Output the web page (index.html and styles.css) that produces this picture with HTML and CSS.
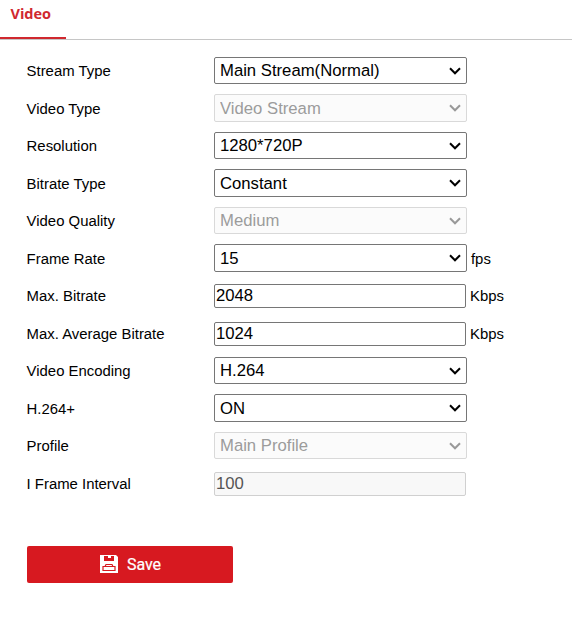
FILE: index.html
```
<!DOCTYPE html>
<html lang="en">
<head>
<meta charset="utf-8">
<title>Video</title>
<link rel="stylesheet" href="styles.css">
</head>
<body>
<svg width="0" height="0" class="defs"><symbol id="chevron" viewBox="0 0 12 8"><path d="M1 1.3l5 5 5-5" fill="none" stroke="currentColor" stroke-width="2"/></symbol></svg>
<nav class="tabs"><a class="tab">Video</a></nav>
<form class="form">
<div class="row"><label>Stream Type</label><div class="pick"><select><option>Main Stream(Normal)</option></select><svg class="chevron"><use href="#chevron"/></svg></div></div>
<div class="row"><label>Video Type</label><div class="pick off"><select disabled><option>Video Stream</option></select><svg class="chevron"><use href="#chevron"/></svg></div></div>
<div class="row"><label>Resolution</label><div class="pick"><select><option>1280*720P</option></select><svg class="chevron"><use href="#chevron"/></svg></div></div>
<div class="row"><label>Bitrate Type</label><div class="pick"><select><option>Constant</option></select><svg class="chevron"><use href="#chevron"/></svg></div></div>
<div class="row"><label>Video Quality</label><div class="pick off"><select disabled><option>Medium</option></select><svg class="chevron"><use href="#chevron"/></svg></div></div>
<div class="row"><label>Frame Rate</label><div class="pick"><select><option>15</option></select><svg class="chevron"><use href="#chevron"/></svg></div><span class="unit">fps</span></div>
<div class="row"><label>Max. Bitrate</label><input type="text" value="2048"><span class="unit">Kbps</span></div>
<div class="row"><label>Max. Average Bitrate</label><input type="text" value="1024"><span class="unit">Kbps</span></div>
<div class="row"><label>Video Encoding</label><div class="pick"><select><option>H.264</option></select><svg class="chevron"><use href="#chevron"/></svg></div></div>
<div class="row"><label>H.264+</label><div class="pick"><select><option>ON</option></select><svg class="chevron"><use href="#chevron"/></svg></div></div>
<div class="row"><label>Profile</label><div class="pick off"><select disabled><option>Main Profile</option></select><svg class="chevron"><use href="#chevron"/></svg></div></div>
<div class="row"><label>I Frame Interval</label><input type="text" value="100" disabled></div>
<button class="save" type="button">
<svg width="18" height="18" viewBox="0 0 18 18"><path fill="#fff" d="M0 0h16l2 2v16H0z"/><path fill="#d71920" d="M4 1h4v2h3V1h3v5H4z"/><path fill="none" stroke="#d71920" stroke-width="1.200" d="M5 11.500l1-2h6l1 2M3 11.500h12v4H3z"/></svg>
<span>Save</span></button>
</form>
</body>
</html>
```
FILE: styles.css
```
body {
  margin: 0;
  background: #fff;
  color: #000;
  font: 14.9px "Liberation Sans", Arial, sans-serif;
}
.defs {
  display: none;
}
.tabs {
  display: flex;
  height: 39px;
  border-bottom: 1px solid #c6c6c6;
}
.tab {
  box-sizing: border-box;
  width: 66px;
  height: 39px;
  padding: 4px 0 0 10.5px;
  border-bottom: 2px solid #d0282f;
  color: #d0282f;
  font: 700 14.5px/20px "Open Sans", sans-serif;
}
.form {
  padding: 12px 0 0 26.6px;
}
.row {
  display: flex;
  align-items: center;
  height: 37.5px;
}
label {
  width: 187.4px;
}
label, .unit {
  padding-top: 0.5px;
}
.pick {
  display: grid;
  align-items: center;
  margin-bottom: 0.2px;
}
.pick select, .chevron {
  grid-area: 1 / 1;
}
.chevron {
  justify-self: end;
  width: 12px;
  height: 8px;
  margin-right: 6px;
  pointer-events: none;
}
.off .chevron {
  color: #999;
}
select, input {
  box-sizing: border-box;
  margin: 0;
  border: 1px solid #767676;
  border-radius: 2px;
  font: 16.7px "Liberation Sans", Arial, sans-serif;
}
select {
  appearance: none;
  width: 253px;
  height: 27.6px;
  padding: 0 20px 0 5px;
  background: #fff;
  color: #000;
}
input {
  width: 252px;
  height: 24px;
  margin-top: 1px;
  padding: 0 1px;
}
select:disabled {
  border-color: #d9d9d9;
  background: #fbfbfb;
  color: #9c9c9c;
  opacity: 1;
}
input:disabled {
  border-color: #d0d0d0;
  background: #f8f8f8;
  color: #545454;
}
.unit {
  margin-left: 4px;
}
.save {
  display: flex;
  align-items: center;
  justify-content: center;
  gap: 9px;
  width: 206px;
  height: 37px;
  margin: 44px 0 0 0.4px;
  padding: 0 0 2px 1px;
  border: 0;
  border-radius: 2px;
  background: #d71920;
  color: #fff;
  font: 400 16px Roboto, sans-serif;
}
.save span {
  padding-top: 1px;
  -webkit-text-stroke: 0.2px #fff;
}
```
